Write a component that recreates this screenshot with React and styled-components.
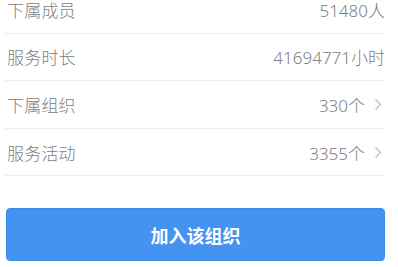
import React from "react";
import styled, { createGlobalStyle } from "styled-components";

const GlobalStyle = createGlobalStyle`
  body {
    margin: 0;
    background: #ffffff;
    font-family: "Noto Sans", "Noto Sans CJK SC", sans-serif;
  }
`;

const Page = styled.div`
  display: flex;
  flex-direction: column;
  padding: 0 13px 0 5px;
  overflow: hidden;
  height: 267px;
`;

const List = styled.ul`
  list-style: none;
  margin: -14px 0 0;
  padding: 0;
`;

const Row = styled.li`
  box-sizing: border-box;
  height: 47.6px;
  display: flex;
  align-items: center;
  justify-content: space-between;
  padding: 0 0 0 2px;
  border-bottom: 1px solid #ececec;
`;

const Label = styled.span`
  font-size: 17px;
  font-weight: 300;
  color: #808080;
  letter-spacing: 0.2px;
`;

const Value = styled.span`
  display: flex;
  align-items: center;
  font-size: 17px;
  font-weight: 300;
  color: #808080;
`;

const Arrow = styled.svg`
  width: 8px;
  height: 13px;
  margin-left: 9px;
  margin-right: 3px;
`;

const JoinButton = styled.button`
  margin: 32px 0 0 1px;
  height: 53px;
  border: 1px solid #3f8be6;
  border-radius: 4px;
  background: #4593f1;
  color: #ffffff;
  font-family: "Noto Sans CJK SC", sans-serif;
  font-size: 18px;
  font-weight: 700;
  cursor: pointer;
`;

const rows = [
  { label: "下属成员", value: "51480人" },
  { label: "服务时长", value: "41694771小时" },
  { label: "下属组织", value: "330个", link: true },
  { label: "服务活动", value: "3355个", link: true },
];

export default function App() {
  return (
    <>
      <GlobalStyle />
      <Page>
        <List>
          {rows.map((r) => (
            <Row key={r.label}>
              <Label>{r.label}</Label>
              <Value>
                {r.value}
                {r.link && (
                  <Arrow viewBox="0 0 8 13">
                    <path d="M1.5 1.5 L6.5 6.5 L1.5 11.5" fill="none" stroke="#c4c4c4" strokeWidth="1.5" />
                  </Arrow>
                )}
              </Value>
            </Row>
          ))}
        </List>
        <JoinButton>加入该组织</JoinButton>
      </Page>
    </>
  );
}
